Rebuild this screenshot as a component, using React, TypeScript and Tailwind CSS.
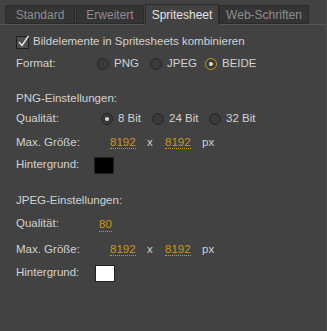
import React from "react";

const font = { fontFamily: '"Liberation Sans", Arial, sans-serif' };

function Radio({ checked, active }: { checked?: boolean; active?: boolean }) {
  return (
    <span
      className={`flex h-[12px] w-[12px] shrink-0 items-center justify-center rounded-full border bg-[#3a3a3a] ${
        active ? "border-[#c9961c]" : "border-[#262626]"
      }`}
    >
      {checked && <span className="h-[4px] w-[4px] rounded-full bg-[#d8d8d8]" />}
    </span>
  );
}

function RadioOpt({ label, checked, active, w }: { label: string; checked?: boolean; active?: boolean; w?: string }) {
  return (
    <span className={`flex items-center gap-[5px] ${w ?? ""}`}>
      <Radio checked={checked} active={active} />
      <span>{label}</span>
    </span>
  );
}

function Num({ v }: { v: string }) {
  return (
    <span className="border-b border-dotted border-[#c9961c] leading-[14px] text-[#c9961c]">{v}</span>
  );
}

function SizeRow() {
  return (
    <div className="flex h-[22px] items-center">
      <span className="w-[94px]">Max. Größe:</span>
      <span className="w-[37px]"><Num v="8192" /></span>
      <span className="w-[18px]">x</span>
      <span className="w-[37px]"><Num v="8192" /></span>
      <span>px</span>
    </div>
  );
}

function BgRow({ color, w }: { color: string; w: string }) {
  return (
    <div className="flex h-[22px] items-center">
      <span className={w}>Hintergrund:</span>
      <span className={`h-[17px] w-[20px] border ${color}`} />
    </div>
  );
}

export default function App() {
  const tabs = [
    { t: "Standard", c: "ml-[5px] w-[70px]" },
    { t: "Erweitert", c: "ml-[1px] w-[68px]" },
    { t: "Spritesheet", c: "ml-[1px] w-[74px]" },
    { t: "Web-Schriften", c: "w-[90px]" },
  ];
  return (
    <div
      className="h-[331px] w-[327px] overflow-hidden border-r border-[#4c4c4c] bg-[#424242] text-[11.5px] text-[#d2d2d2]"
      style={font}
    >
      <div className="flex h-[25px] items-end border-b border-[#555]">
        {tabs.map((tab, i) =>
          i === 2 ? (
            <div
              key={tab.t}
              className={`${tab.c} -mb-px flex h-[21px] items-center justify-center border border-b-0 border-[#2a2a2a] bg-[#424242] text-[12px] text-[#e4e4e4]`}
            >
              {tab.t}
            </div>
          ) : (
            <div
              key={tab.t}
              className={`${tab.c} flex h-[19px] items-center justify-center border border-[#2a2a2a] bg-[#343434] text-[12px] text-[#8e8e8e]`}
            >
              {tab.t}
            </div>
          )
        )}
      </div>

      <div className="px-[16px] pt-[9px]">
        <div className="flex h-[16px] items-center gap-[4px]">
          <span className="relative h-[13px] w-[13px] border border-[#1e1e1e] bg-[#4e4e4e]">
            <svg className="absolute -top-[2px] left-0" width="13" height="13" viewBox="0 0 13 13">
              <path d="M2 7 L5 10.5 L11.5 1" fill="none" stroke="#e2e2e2" strokeWidth="1.5" />
            </svg>
          </span>
          <span>Bildelemente in Spritesheets kombinieren</span>
        </div>

        <div className="mt-[3px] flex h-[22px] items-center">
          <span className="w-[81px]">Format:</span>
          <RadioOpt label="PNG" w="w-[53px]" />
          <RadioOpt label="JPEG" w="w-[55px]" />
          <RadioOpt label="BEIDE" checked active />
        </div>

        <div className="mt-[14px] flex h-[20px] items-center">PNG-Einstellungen:</div>
        <div className="flex h-[20px] items-center">
          <span className="w-[85px]">Qualität:</span>
          <RadioOpt label="8 Bit" checked w="w-[51px]" />
          <RadioOpt label="24 Bit" w="w-[57px]" />
          <RadioOpt label="32 Bit" />
        </div>
        <div className="mt-[3px]">
          <SizeRow />
        </div>
        <BgRow color="border-[#222] bg-black" w="w-[78px]" />

        <div className="mt-[15px] flex h-[20px] items-center">JPEG-Einstellungen:</div>
        <div className="mt-[2px] flex h-[22px] items-center">
          <span className="w-[83px]">Qualität:</span>
          <Num v="80" />
        </div>
        <div className="mt-[4px]">
          <SizeRow />
        </div>
        <div className="mt-[1px]">
          <BgRow color="border-[#222] bg-white" w="w-[79px]" />
        </div>
      </div>
    </div>
  );
}
